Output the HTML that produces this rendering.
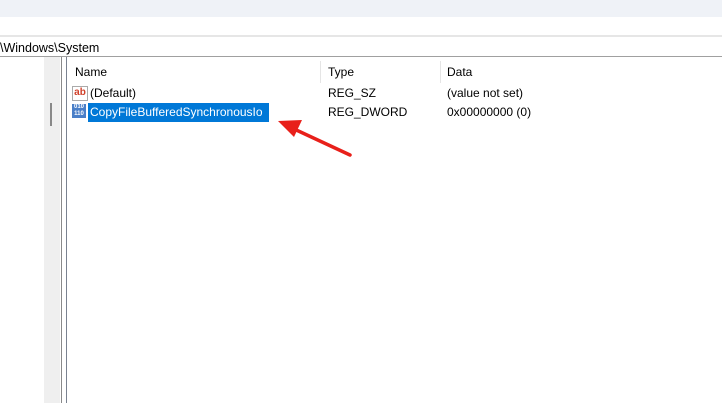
<html><body style="margin:0;width:722px;height:403px;overflow:hidden;background:#fff;font-family:'Liberation Sans',sans-serif;font-size:12px;color:#000;position:relative">
<div style="position:absolute;left:0;top:0;width:722px;height:17px;background:#eff2f7"></div>
<div style="position:absolute;left:0;top:35px;width:722px;height:2px;background:#e6e6e6"></div>
<div style="position:absolute;left:0;top:40px;line-height:16px;font-size:12.5px">\Windows\System</div>
<div style="position:absolute;left:0;top:56px;width:722px;height:1px;background:#a0a0a0"></div>
<div style="position:absolute;left:44px;top:57px;width:16px;height:346px;background:#efefef"></div>
<div style="position:absolute;left:50px;top:103px;width:2px;height:23px;background:#888"></div>
<div style="position:absolute;left:61px;top:57px;width:1px;height:346px;background:#8a8a8a"></div>
<div style="position:absolute;left:66px;top:57px;width:1px;height:346px;background:#7a8290"></div>
<div style="position:absolute;left:320px;top:61px;width:1px;height:22px;background:#e5e5e5"></div>
<div style="position:absolute;left:440px;top:61px;width:1px;height:22px;background:#e5e5e5"></div>
<div style="position:absolute;left:75px;top:65px">Name</div>
<div style="position:absolute;left:328px;top:65px">Type</div>
<div style="position:absolute;left:447px;top:65px">Data</div>
<div style="position:absolute;left:72px;top:86px;width:14px;height:13px;border:1px solid #aaa;background:#fff;color:#d0402a;font-weight:bold;font-size:10px;line-height:12px;text-align:center">ab</div>
<div style="position:absolute;left:90px;top:86px;line-height:14px">(Default)</div>
<div style="position:absolute;left:328px;top:86px;line-height:14px">REG_SZ</div>
<div style="position:absolute;left:447px;top:86px;line-height:14px">(value not set)</div>
<div style="position:absolute;left:72px;top:104px;width:14px;height:14px;background:#4a7fc8;color:#fff;font-size:6px;line-height:7px;text-align:center;font-weight:bold">010<br>110</div>
<div style="position:absolute;left:88px;top:103px;width:181px;height:19px;background:#0078d7;color:#fff;line-height:19px;padding-left:2px;box-sizing:border-box">CopyFileBufferedSynchronousIo</div>
<div style="position:absolute;left:328px;top:105px;line-height:14px">REG_DWORD</div>
<div style="position:absolute;left:447px;top:105px;line-height:14px">0x00000000 (0)</div>
<svg style="position:absolute;left:0;top:0" width="722" height="403"><line x1="350" y1="155" x2="292" y2="128" stroke="#e8201a" stroke-width="3.5" stroke-linecap="round"/><polygon points="278,121 302,120 294,137" fill="#e8201a"/></svg>
</body></html>
